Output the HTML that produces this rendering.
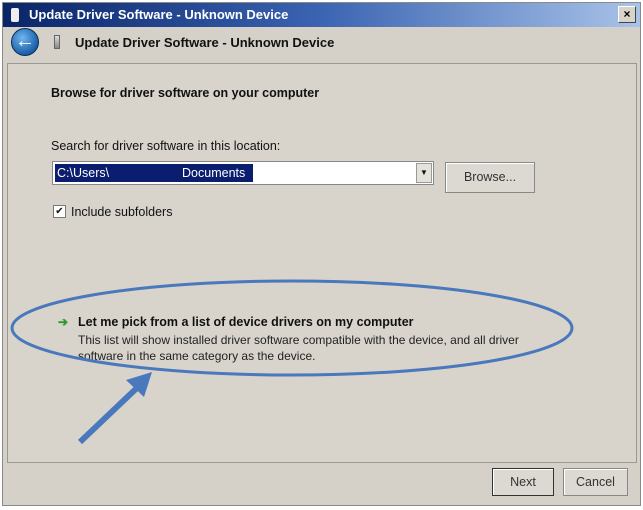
<!DOCTYPE html>
<html><head><style>
*{margin:0;padding:0;box-sizing:border-box}
body{width:643px;height:510px;background:#fff;font-family:"Liberation Sans",sans-serif;position:relative;overflow:hidden;font-size:12px;color:#111}
.win{position:absolute;left:2px;top:2px;width:639px;height:504px;background:#d5d1c9;border:1px solid #8a8a8a}
.title{position:absolute;left:0;top:0;width:637px;height:24px;background:linear-gradient(90deg,#0a2468,#3b64b2 50%,#a9c3e8);color:#fff;font-weight:bold;font-size:13px;line-height:24px;padding-left:26px}
.close{position:absolute;right:4px;top:3px;width:18px;height:17px;background:#d8d4cc;border:1px solid #fff;border-right-color:#444;border-bottom-color:#444;color:#000;font-size:12px;line-height:14px;text-align:center;font-weight:bold}
.panel{position:absolute;left:4px;top:60px;width:630px;height:400px;background:#d8d4cc;border:1px solid #9a9890}
.abs{position:absolute}
.btn{position:absolute;background:#dcd9d2;border:1px solid #888;box-shadow:inset 1px 1px #fff;text-align:center;font-size:12.5px;color:#333}
</style></head><body>
<div class="win">
<div class="title">Update Driver Software - Unknown Device
<div class="abs" style="left:8px;top:5px;width:8px;height:14px;background:#eee;border-radius:2px"></div>
<div class="close">×</div></div>
<div class="abs" style="left:8px;top:25px;width:28px;height:28px;border-radius:50%;background:radial-gradient(circle at 40% 35%,#6fb6f0,#1a5fa8 70%,#0d3b72);border:1px solid #0b2c55;color:#fff;font-size:20px;line-height:24px;text-align:center;font-weight:bold">←</div>
<div class="abs" style="left:51px;top:32px;width:6px;height:14px;background:linear-gradient(#ddd,#888);border:1px solid #666"></div>
<div class="abs" style="left:72px;top:32px;font-size:13px;font-weight:bold;color:#111">Update Driver Software - Unknown Device</div>
<div class="panel">
<div class="abs" style="left:43px;top:22px;font-weight:bold;font-size:12.5px">Browse for driver software on your computer</div>
<div class="abs" style="left:43px;top:75px;font-size:12.5px">Search for driver software in this location:</div>
<div class="abs" style="left:44px;top:97px;width:382px;height:24px;background:#fff;border:1px solid #888">
<div class="abs" style="left:2px;top:2px;width:198px;height:18px;background:#0a1d6e;color:#fff;font-size:12.5px;line-height:18px;padding-left:2px">C:\Users\&nbsp;&nbsp;&nbsp;&nbsp;&nbsp;&nbsp;&nbsp;&nbsp;&nbsp;&nbsp;&nbsp;&nbsp;&nbsp;&nbsp;&nbsp;&nbsp;&nbsp;&nbsp;&nbsp;&nbsp;&nbsp;Documents</div>
<div class="abs" style="right:1px;top:1px;width:16px;height:20px;background:#e5e2dc;border:1px solid #999;font-size:8px;text-align:center;line-height:18px">▼</div></div>
<div class="btn" style="left:437px;top:98px;width:90px;height:31px;line-height:29px">Browse...</div>
<div class="abs" style="left:45px;top:141px;width:13px;height:13px;background:#fff;border:1px solid #777;font-size:10px;line-height:11px;text-align:center">✔</div>
<div class="abs" style="left:63px;top:141px;font-size:12.5px">Include subfolders</div>
<div class="abs" style="left:50px;top:251px;color:#2a9a2a;font-weight:bold;font-size:12px">➔</div>
<div class="abs" style="left:70px;top:251px;font-weight:bold;font-size:12.5px">Let me pick from a list of device drivers on my computer</div>
<div class="abs" style="left:70px;top:268px;font-size:12px;line-height:16px;color:#222">This list will show installed driver software compatible with the device, and all driver<br>software in the same category as the device.</div>
</div>
<div class="btn" style="left:489px;top:465px;width:62px;height:28px;line-height:26px;border-color:#333">Next</div>
<div class="btn" style="left:560px;top:465px;width:65px;height:28px;line-height:26px">Cancel</div>
</div>
<svg class="abs" style="left:0;top:0" width="643" height="510">
<ellipse cx="292" cy="328" rx="280" ry="47" fill="none" stroke="#4a78bc" stroke-width="3"/>
<line x1="80" y1="442" x2="140" y2="385" stroke="#4a78bc" stroke-width="6"/>
<polygon points="152,372 126,380 144,397" fill="#4a78bc"/>
</svg>
</body></html>
